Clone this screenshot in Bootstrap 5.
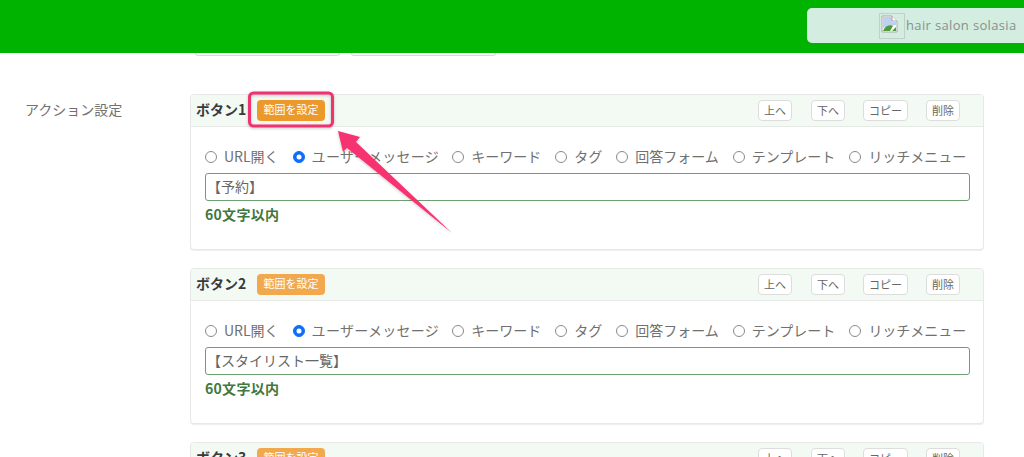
<!DOCTYPE html>
<html lang="ja"><head><meta charset="utf-8">
<title>アクション設定</title>
<link href="https://cdn.jsdelivr.net/npm/bootstrap@5.3.0/dist/css/bootstrap.min.css" rel="stylesheet">
<style>
html,body{height:457px;overflow:hidden}
body{font-family:"Noto Sans CJK JP","Noto Sans",sans-serif;font-size:14px;color:#707070;background:#fff;position:relative}
.topbar{height:53px;background:#00b300;padding-top:8px}
.shopchip{margin-left:807px;height:35px;background:#d3eee0;border-radius:5px 0 0 5px;padding-left:72px;color:#8a8f8c;font-family:"Open Sans",sans-serif;font-size:13px;letter-spacing:.35px}
.brokenimg{width:26px;height:26px;margin-right:1px;display:block}
.clipzone{height:3px;padding-left:195px;gap:11px;overflow:hidden}
.clipbox{width:145px;height:3px;border:1px solid #d9d9d9;border-top:0;border-radius:0 0 4px 4px}
.mainrow{padding-top:38px}
.sidelabel{width:190px;padding-left:25px;padding-top:5px;color:#707070;flex:none}
.cardsstack{width:794px;flex:none}
.actcard{border:1px solid #e6e9e6;border-radius:4px;height:156px;margin-bottom:18px;--bs-card-bg:#fff;box-shadow:0 1px 1px #eee}
.actcard .card-header{height:32px;background:#f3f9f3;border-bottom:1px solid #e6e9e6;padding:5px 23px 0 5px;border-radius:3px 3px 0 0}
.btntitle{font-weight:700;color:#3a3a3a;font-size:14px;line-height:19px;width:61px}
.rangebtn{width:68px;height:21px;border-radius:4px;background:#f2a94e;color:#fff;font-size:11px;line-height:19px;text-align:center}
.rangebtn.hot{background:#ec982a}
.minibtn{height:21px;border:1px solid #ddd;border-radius:4px;background:#fff;font-size:11px;line-height:17px;padding:0;text-align:center;color:#666}
.w34{width:34px}.w45{width:45px}
.acttools{gap:18px}
.acttools .minibtn:first-child{margin-right:1px}
.actcard .card-body{padding:19px 14px 0}
.radiorow{height:20px;line-height:20px;white-space:nowrap;color:#707070}
.radioopt{display:flex;align-items:center;gap:7px;margin-right:14px;position:relative}
.radioopt .form-check-input{width:12px;height:12px;margin:1px 0 0;border-color:#8a8a8a;flex:none}
.radioopt .form-check-input:checked{background-color:#0d6efd;border-color:#0d6efd}
.widerlabel{letter-spacing:.3px;margin-right:13px}
.msginput.form-control{height:28px;margin-top:7px;width:765px;border:1px solid #6d9f70;border-radius:3px;padding:0 0 3px 1px;font-size:14px;color:#666;box-shadow:none}
.limitnote{color:#41783f;font-weight:700;margin-top:3px;line-height:21px;letter-spacing:.3px}
.annot{position:absolute;left:0;top:0;pointer-events:none}
</style></head>
<body>
<div class="topbar"><div class="shopchip d-flex align-items-center">
<svg class="brokenimg" viewBox="0 0 26 26"><rect x=".5" y=".5" width="25" height="25" fill="none" stroke="#c3cfc8"/><path d="M3 3h10l5 5v11H3z" fill="#fff" stroke="#a9a9a9"/><path d="M4 4h9v5h4v3L4 15z" fill="#bcd0f0"/><path d="M4 18c2-5 6-7 10-5l-3 5z" fill="#4c9a3a"/><path d="M13 18l4-4v4z" fill="#4c9a3a"/><path d="M13 3v5h5" fill="#fff" stroke="#a9a9a9"/></svg>
<span>hair salon solasia</span></div></div>
<div class="clipzone d-flex"><div class="clipbox"></div><div class="clipbox"></div></div>
<div class="mainrow d-flex">
<div class="sidelabel">アクション設定</div>
<div class="cardsstack">

<div class="card actcard">
<div class="card-header d-flex"><div class="btntitle">ボタン1</div><div class="rangebtn hot">範囲を設定</div>
<div class="acttools ms-auto d-flex"><button class="btn minibtn w34">上へ</button><button class="btn minibtn w34">下へ</button><button class="btn minibtn w45">コピー</button><button class="btn minibtn w34">削除</button></div></div>
<div class="card-body">
<div class="radiorow d-flex">
<label class="radioopt"><input class="form-check-input" type="radio" name="a1">URL開く</label>
<label class="radioopt widerlabel"><input class="form-check-input" type="radio" name="a1" checked>ユーザーメッセージ</label>
<label class="radioopt"><input class="form-check-input" type="radio" name="a1">キーワード</label>
<label class="radioopt"><input class="form-check-input" type="radio" name="a1">タグ</label>
<label class="radioopt"><input class="form-check-input" type="radio" name="a1">回答フォーム</label>
<label class="radioopt"><input class="form-check-input" type="radio" name="a1">テンプレート</label>
<label class="radioopt"><input class="form-check-input" type="radio" name="a1">リッチメニュー</label>
</div>
<input class="form-control msginput" type="text" value="【予約】">
<div class="limitnote">60文字以内</div>
</div></div>

<div class="card actcard">
<div class="card-header d-flex"><div class="btntitle">ボタン2</div><div class="rangebtn">範囲を設定</div>
<div class="acttools ms-auto d-flex"><button class="btn minibtn w34">上へ</button><button class="btn minibtn w34">下へ</button><button class="btn minibtn w45">コピー</button><button class="btn minibtn w34">削除</button></div></div>
<div class="card-body">
<div class="radiorow d-flex">
<label class="radioopt"><input class="form-check-input" type="radio" name="a2">URL開く</label>
<label class="radioopt widerlabel"><input class="form-check-input" type="radio" name="a2" checked>ユーザーメッセージ</label>
<label class="radioopt"><input class="form-check-input" type="radio" name="a2">キーワード</label>
<label class="radioopt"><input class="form-check-input" type="radio" name="a2">タグ</label>
<label class="radioopt"><input class="form-check-input" type="radio" name="a2">回答フォーム</label>
<label class="radioopt"><input class="form-check-input" type="radio" name="a2">テンプレート</label>
<label class="radioopt"><input class="form-check-input" type="radio" name="a2">リッチメニュー</label>
</div>
<input class="form-control msginput" type="text" value="【スタイリスト一覧】">
<div class="limitnote">60文字以内</div>
</div></div>

<div class="card actcard">
<div class="card-header d-flex"><div class="btntitle">ボタン3</div><div class="rangebtn">範囲を設定</div>
<div class="acttools ms-auto d-flex"><button class="btn minibtn w34">上へ</button><button class="btn minibtn w34">下へ</button><button class="btn minibtn w45">コピー</button><button class="btn minibtn w34">削除</button></div></div>
</div>

</div></div>
<svg class="annot" width="1024" height="457" viewBox="0 0 1024 457">
<defs><filter id="sh" x="-20%" y="-20%" width="140%" height="140%"><feDropShadow dx="0" dy="1" stdDeviation="1.5" flood-color="#000" flood-opacity=".22"/></filter></defs>
<rect x="249.5" y="93" width="83" height="33" rx="4" fill="none" stroke="#f0306f" stroke-width="3" filter="url(#sh)"/>
<path d="M338 131 L360 137 L356 142 L452 233 L347 148 L343 152 Z" fill="#f7326f" filter="url(#sh)"/>
</svg>
</body></html>
